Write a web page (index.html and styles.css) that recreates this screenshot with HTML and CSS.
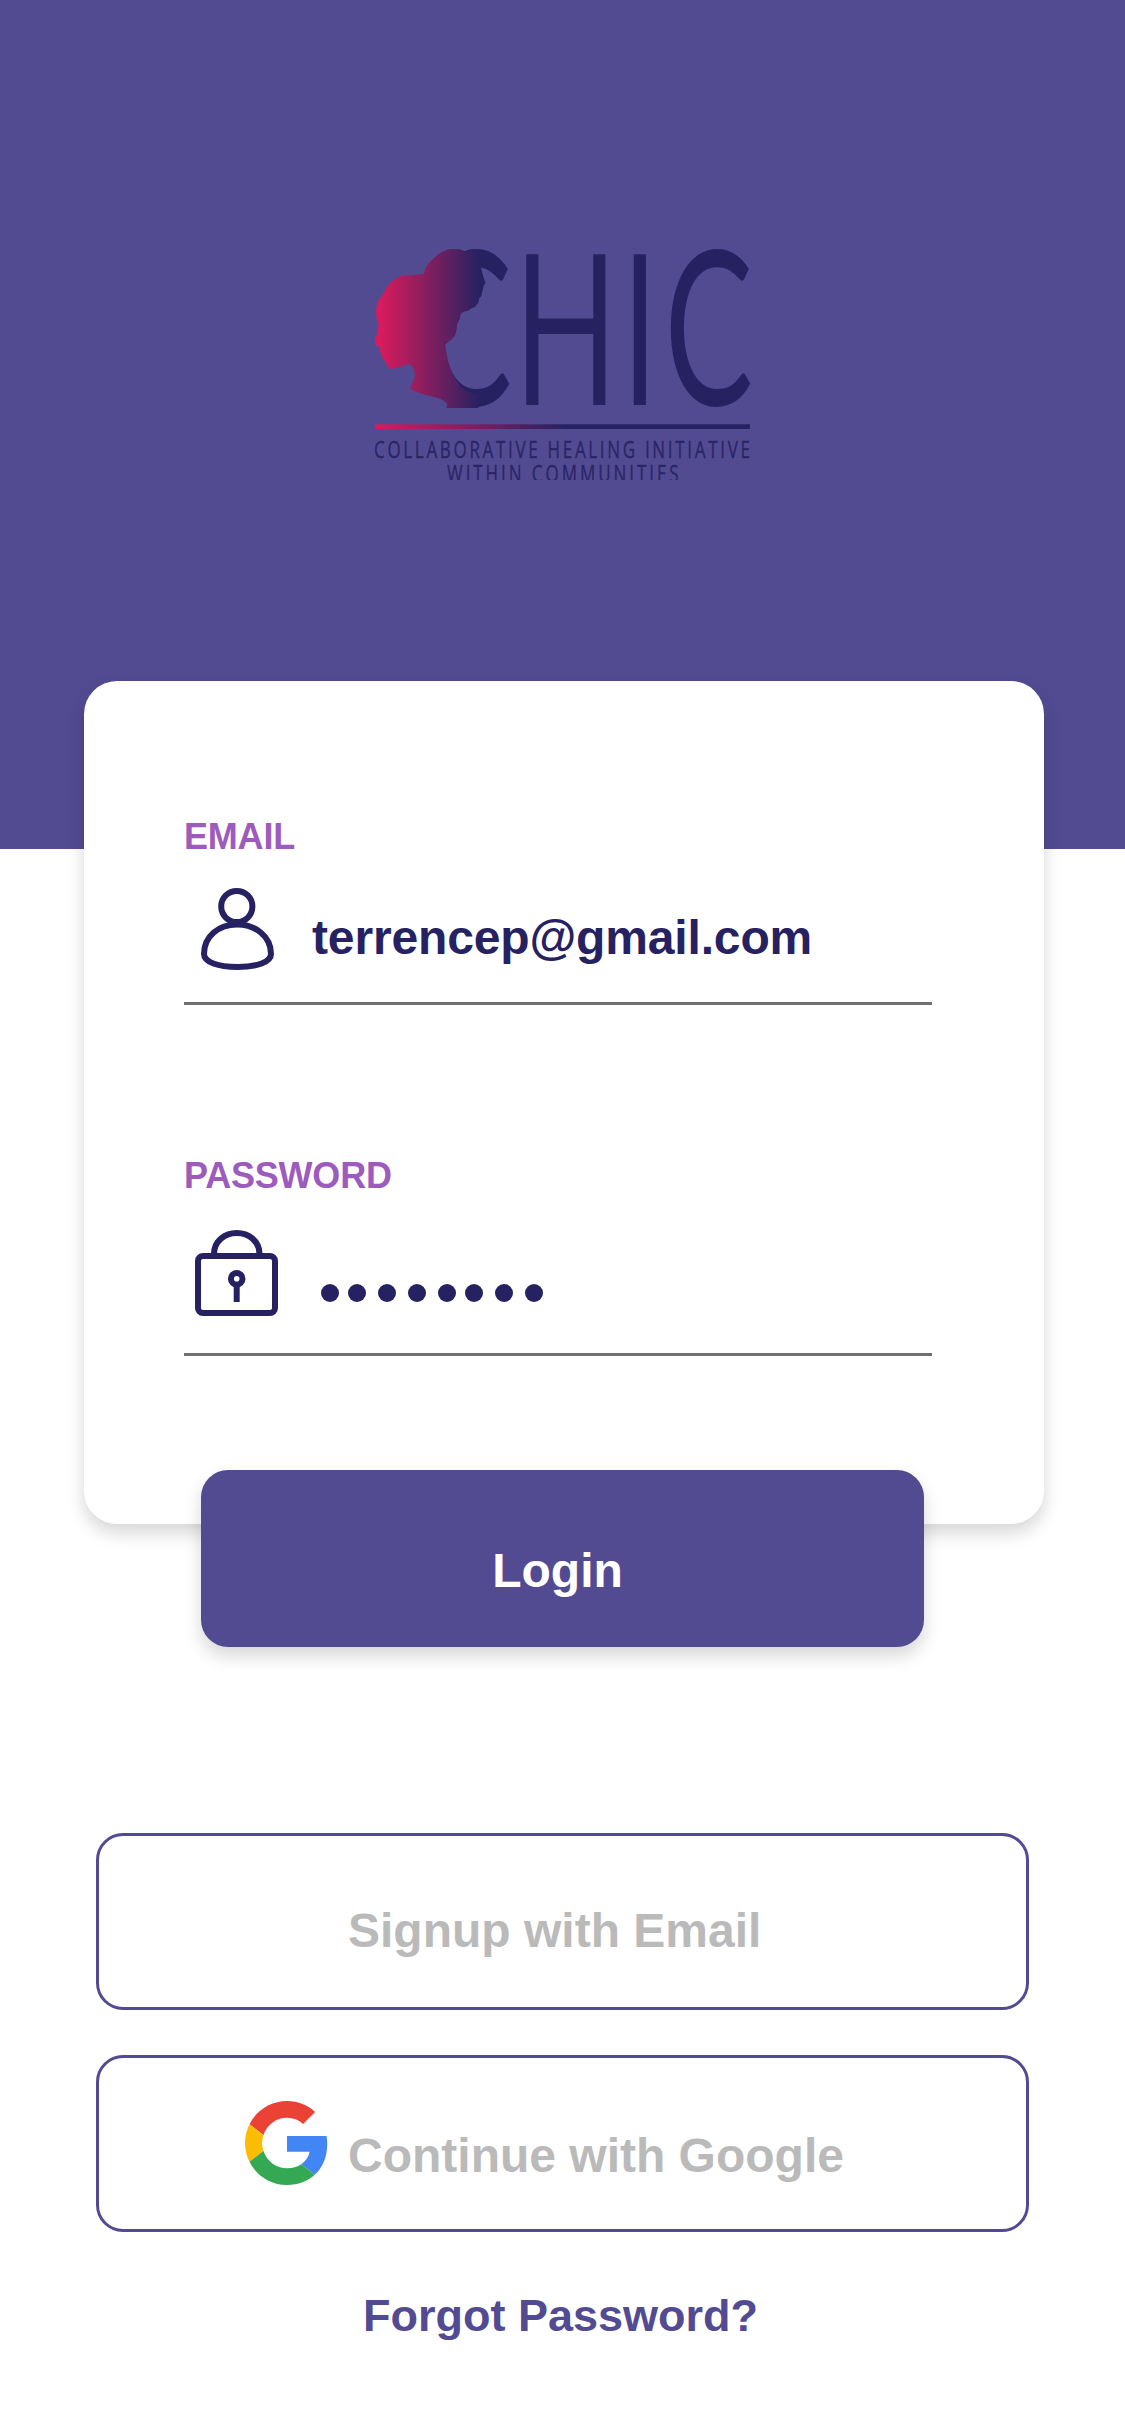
FILE: index.html
```html
<!DOCTYPE html>
<html lang="en">
<head>
<meta charset="utf-8">
<title>CHIC Login</title>
<link rel="stylesheet" href="styles.css">
</head>
<body>
<header class="hero">
  <svg class="logo" viewBox="375 245 375 235" role="img" aria-label="CHIC">
    <defs>
      <linearGradient id="face" gradientUnits="userSpaceOnUse" x1="60" y1="0" x2="360" y2="0">
        <stop offset="0" stop-color="#d91b5c"/><stop offset="1" stop-color="#262262"/>
      </linearGradient>
      <linearGradient id="rule" gradientUnits="userSpaceOnUse" x1="375" y1="0" x2="565" y2="0">
        <stop offset="0" stop-color="#d91b5c"/><stop offset="1" stop-color="#262262"/>
      </linearGradient>
    </defs>
    <g class="logo-word">
      <text class="logo-round" transform="translate(423.5 404.7) scale(.617 1)">C</text>
      <text transform="translate(512 404.7) scale(.693 1)">H</text>
      <text transform="translate(619.5 404.7) scale(.693 1)">I</text>
      <text class="logo-round" transform="translate(664.5 404.7) scale(.617 1)">C</text>
    </g>
    <path transform="translate(360 235) scale(.33333)" fill="url(#face)" d="M360 88L365 105L370 125L376 142L371 153L368 165L364 183L358 190L355 203L345 216L335 220L325 227L310 230L302 238L299 253L291 268L290 285L284 303L272 316L256 328C260 370 270 403 285 430C300 460 325 478 355 478V519H259L262 508C256 498 245 492 220 486C190 478 160 472 150 460L157 445L166 420L160 400L151 387C135 390 110 400 95 402L85 398L77 380L66 368L64 355L58 350L62 338L46 329L45 308L52 300L54 280L56 270L50 250C46 220 50 200 68 180L82 155C98 132 120 121 150 121L190 117L197 98C215 72 240 48 270 42L300 43L318 50L355 42V88Z"/>
    <rect x="375" y="424.3" width="375" height="4.7" fill="url(#rule)"/>
    <g class="logo-tag">
      <text transform="translate(374 458) scale(.74 1)" textLength="508">COLLABORATIVE HEALING INITIATIVE</text>
      <text transform="translate(447 482) scale(.74 1)" textLength="313">WITHIN COMMUNITIES</text>
    </g>
  </svg>
</header>

<main>
  <form class="card">
    <div class="field">
      <div class="label">EMAIL</div>
      <div class="control control-email">
        <svg class="icon" viewBox="184 855 128 147">
          <circle cx="236.8" cy="906.5" r="15.6"/>
          <path d="M204 954C204 936 219 924.5 237 924.5S271 936 271 954C271 962 257 967 237.5 967S204 962 204 954Z"/>
        </svg>
        <span class="value">terrencep@gmail.com</span>
      </div>
    </div>
    <div class="field">
      <div class="label label-password">PASSWORD</div>
      <div class="control control-password">
        <svg class="icon" viewBox="184 1194 128 159">
          <rect x="198" y="1256" width="77" height="57" rx="5"/>
          <path d="M214 1254C214 1241 225 1233 236.8 1233S259.5 1241 259.5 1254M236.7 1285V1302"/>
          <circle cx="236.7" cy="1278.8" r="5.8"/>
        </svg>
        <svg class="dots" viewBox="312 1194 240 159" role="img" aria-label="Password entered">
          <circle cx="330" cy="1293" r="9"/><circle cx="357" cy="1293" r="9"/>
          <circle cx="387" cy="1293" r="9"/><circle cx="417" cy="1293" r="9"/>
          <circle cx="447" cy="1293" r="9"/><circle cx="474" cy="1293" r="9"/>
          <circle cx="504" cy="1293" r="9"/><circle cx="534" cy="1293" r="9"/>
        </svg>
      </div>
    </div>
    <div class="login">Login</div>
  </form>

  <section class="options">
    <div class="option"><span class="option-icon"></span><span class="signup">Signup with Email</span></div>
    <div class="option option-google">
      <span class="option-icon">
        <svg class="google" viewBox="0 0 48 48">
          <path fill="#ea4335" d="M24 9.5c3.54 0 6.71 1.22 9.21 3.6l6.85-6.85C35.9 2.38 30.47 0 24 0 14.62 0 6.51 5.38 2.56 13.22l7.98 6.19C12.43 13.72 17.74 9.5 24 9.5z"/>
          <path fill="#4285f4" d="M46.98 24.55c0-1.57-.15-3.09-.38-4.55H24v9.02h12.94c-.58 2.96-2.26 5.48-4.78 7.18l7.73 6c4.51-4.18 7.09-10.36 7.09-17.65z"/>
          <path fill="#fbbc05" d="M10.53 28.59c-.48-1.45-.76-2.99-.76-4.59s.27-3.14.76-4.59l-7.98-6.19C.92 16.46 0 20.12 0 24c0 3.88.92 7.54 2.56 10.78l7.97-6.19z"/>
          <path fill="#34a853" d="M24 48c6.48 0 11.93-2.13 15.89-5.81l-7.73-6c-2.15 1.45-4.92 2.3-8.16 2.3-6.26 0-11.57-4.22-13.47-9.91l-7.98 6.19C6.51 42.62 14.62 48 24 48z"/>
        </svg>
      </span>
      <span class="continue">Continue with Google</span>
    </div>
    <div class="forgot">Forgot Password?</div>
  </section>
</main>
</body>
</html>
```
FILE: styles.css
```css
* { box-sizing: border-box; }
body {
  margin: 0;
  width: 1125px;
  height: 2436px;
  overflow: hidden;
  background: #fff;
  font-family: "Liberation Sans", Arial, sans-serif;
  font-weight: 700;
  font-size: 48px;
  line-height: 48px;
  white-space: nowrap;
}
.hero {
  height: 849px;
  padding-top: 245px;
  background: #524b92;
}
.logo {
  display: block;
  width: 375px;
  height: 235px;
  margin: 0 auto;
  overflow: hidden;
}
.logo-word, .logo-tag {
  fill: #262262;
  font-family: "Open Sans", "Noto Sans", sans-serif;
  font-weight: 400;
}
.logo-word { font-size: 211px; }
.logo-round {
  font-family: Lato, "Open Sans", sans-serif;
  font-size: 215px;
}
.logo-tag {
  font-size: 23px;
  opacity: .9;
  stroke: #262262;
  stroke-width: .3;
}
.card {
  position: relative;
  width: 960px;
  height: 843px;
  margin: -168px 0 0 84px;
  padding: 138px 112px 0 100px;
  border-radius: 33px;
  background: #fff;
  box-shadow: 0 9px 18px rgba(0, 0, 0, .16);
}
.label {
  height: 36px;
  color: #9d5bbd;
  font-size: 36px;
  line-height: 36px;
  letter-spacing: -.2px;
}
.control {
  display: flex;
  align-items: flex-start;
  border-bottom: 3px solid #707070;
}
.control-email { height: 150px; }
.control-password { height: 162px; }
.field + .field { margin-top: 153px; }
.icon {
  flex: none;
  width: 128px;
  height: 100%;
  fill: none;
  stroke: #262262;
  stroke-width: 6;
}
.value {
  padding-top: 59px;
  color: #262262;
  letter-spacing: -.15px;
}
.dots {
  width: 240px;
  height: 159px;
  fill: #262262;
}
.login {
  width: 723px;
  height: 177px;
  margin: 114px 0 0 17px;
  padding: 77px 10px 0 0;
  border-radius: 27px;
  background: #524b92;
  box-shadow: 0 9px 18px rgba(0, 0, 0, .16);
  color: #fff;
  text-align: center;
}
.options { padding: 309px 96px 0; }
.option {
  display: flex;
  height: 177px;
  padding: 71px 0 0 146px;
  border: 3px solid #524b92;
  border-radius: 27px;
  color: #bababa;
}
.option-google {
  margin-top: 45px;
  padding-top: 74px;
}
.option-icon {
  flex: none;
  width: 103px;
}
.google {
  display: block;
  width: 84px;
  height: 84px;
  margin-top: -31px;
}
.forgot {
  margin: 61px 0 0 267px;
  color: #524b92;
  font-size: 45px;
  line-height: 45px;
}
```
